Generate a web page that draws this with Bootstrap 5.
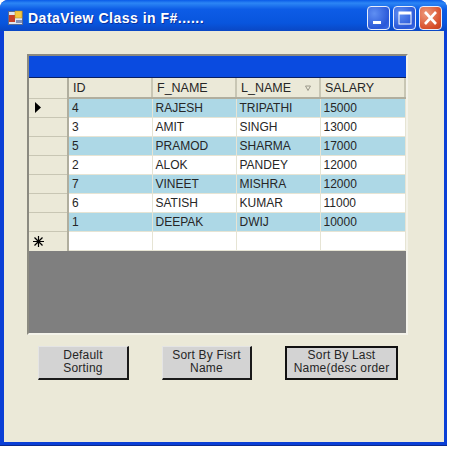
<!DOCTYPE html>
<html lang="en">
<head>
<meta charset="utf-8">
<title>DataView Class in F#</title>
<link href="https://cdn.jsdelivr.net/npm/bootstrap@5.3.0/dist/css/bootstrap.min.css" rel="stylesheet">
<style>
html,body{margin:0;background:#fff;height:449px;overflow:hidden}
body{font-family:"Liberation Sans",Arial,sans-serif;color:#111}
.xp-window{width:447px;height:446px;background:#0a3fd6;border-radius:8px 8px 0 0;border-bottom:1px solid #0c2a8c;overflow:hidden}
.xp-title{height:31px;padding:4px 5px 0 8px;background:linear-gradient(180deg,#0a5be8 0,#2c86f5 10%,#0d5ce6 30%,#0855dd 75%,#0a47c4 100%)}
.xp-heading{color:#fff;font:700 14px "Liberation Sans",sans-serif;letter-spacing:.5px;margin-left:4px;text-shadow:1px 1px 0 #0a2f9c}
.xp-ctl{width:23px;height:24px;border:1px solid #e8eefc;border-radius:4px;margin-left:3px;padding:0;display:flex;align-items:center;justify-content:center}
.xp-blue{background:radial-gradient(circle at 30% 30%,#5f8ff2,#2a58d8 70%,#3c6ee8)}
.xp-red{background:radial-gradient(circle at 30% 30%,#ee9a7c,#d8502c 70%,#c03c1c)}
.xp-client{height:411px;margin:0 3px 0 4px;background:#ebe9d8;padding:23px 36px 0 23px}
.dg-outer{width:381px;height:281px;background:#7f7f7f;border:2px solid;border-color:#8b8a80 #f4f3ea #f4f3ea #8b8a80}
.dg-caption{height:22px;background:#0a4be0;border-bottom:1px solid #0a1f60}
.dg-table.table{width:376px;table-layout:fixed;margin:0;border-collapse:collapse;--bs-table-bg:transparent;font-size:12px}
.dg-table.table>*>*>*{padding:0 0 0 3px;height:19px;line-height:18px;border:0;border-right:1px solid #e6e4d4;border-bottom:1px solid #e6e4d4;color:#262626;box-shadow:none;overflow:hidden;vertical-align:middle}
.dg-table.table>thead>tr>th{font-weight:400;height:20px;background:#ebe9d8;border-right:2px solid #c8c6b4;border-bottom:2px solid #b0ae9e;padding-left:4px;font-size:12.5px}
.dg-table.table>tbody>.dg-blue>td{background:#add8e6}
.dg-table.table>tbody>.dg-white>td{background:#fff}
.dg-table.table>tbody>tr>td.dg-rowhead,.dg-table.table>thead>tr>th.dg-rowhead{background:#ebe9d8;border-right:2px solid #b0ae9e;border-bottom:1px solid #c8c6b4;padding:0 0 0 6px;line-height:0}
.dg-table.table>tbody>tr>td.dg-newrow{padding-left:4px;border-bottom-color:#ebe9d8}
.sort-wrap{display:flex;justify-content:space-between;align-items:center;padding-right:8px}
.btn-row{padding:11px 0 0 11px;width:381px}
.xp-btn{height:34px;padding:0 0 2px;border-style:solid;border-color:#e4e4e4 #1a1a1a #1a1a1a #e4e4e4;border-width:1px 2px 2px 1px;border-radius:0;background:#d3d3d3;color:#262626;font-size:12px;line-height:13px;letter-spacing:.2px}
.xp-btn-a{width:91px;margin-right:33px}
.xp-btn-b{width:90px;margin-right:33px}
.xp-btn-c{width:113px;border:2px solid #111}
</style>
</head>
<body>
<div class="xp-window">
  <div class="xp-title d-flex align-items-center">
    <svg width="16" height="16" viewBox="0 0 16 16"><rect x=".5" y="1.5" width="14" height="13" fill="#dfe6f0" stroke="#5a6a90"/><rect x="1" y="5" width="6" height="7" fill="#c8402a"/><rect x="7" y="1" width="7" height="7" fill="#f4c840" stroke="#b08a20" stroke-width=".5"/><rect x="8" y="10" width="6" height="3" fill="#7f8fb8"/></svg>
    <span class="xp-heading flex-grow-1">DataView Class in F#......</span>
    <div class="xp-ctl xp-blue"><svg width="21" height="22" viewBox="0 0 21 22"><rect x="5" y="14" width="8" height="3" fill="#fff"/></svg></div>
    <div class="xp-ctl xp-blue"><svg width="21" height="22" viewBox="0 0 21 22"><rect x="5" y="5" width="12" height="12" fill="none" stroke="#fff"/><rect x="5" y="5" width="12" height="2.5" fill="#fff"/></svg></div>
    <div class="xp-ctl xp-red"><svg width="21" height="22" viewBox="0 0 21 22"><path d="M5 5l11 12M16 5L5 17" stroke="#fff" stroke-width="2.6"/></svg></div>
  </div>
  <div class="xp-client">
    <div class="dg-outer">
      <div class="dg-caption"></div>
      <table class="table dg-table">
        <colgroup><col style="width:39px"><col style="width:84px"><col style="width:84px"><col style="width:84px"><col style="width:85px"></colgroup>
        <thead><tr><th class="dg-rowhead"></th><th>ID</th><th>F_NAME</th><th><div class="sort-wrap"><span>L_NAME</span><svg width="6" height="6" viewBox="0 0 6 6"><path d="M.5 1h5L3 5.5z" fill="none" stroke="#9a988a"/></svg></div></th><th>SALARY</th></tr></thead>
        <tbody>
          <tr class="dg-blue"><td class="dg-rowhead"><svg width="6" height="11" viewBox="0 0 6 11"><path d="M0 0l6 5.5L0 11z" fill="#000"/></svg></td><td>4</td><td>RAJESH</td><td>TRIPATHI</td><td>15000</td></tr>
          <tr class="dg-white"><td class="dg-rowhead"></td><td>3</td><td>AMIT</td><td>SINGH</td><td>13000</td></tr>
          <tr class="dg-blue"><td class="dg-rowhead"></td><td>5</td><td>PRAMOD</td><td>SHARMA</td><td>17000</td></tr>
          <tr class="dg-white"><td class="dg-rowhead"></td><td>2</td><td>ALOK</td><td>PANDEY</td><td>12000</td></tr>
          <tr class="dg-blue"><td class="dg-rowhead"></td><td>7</td><td>VINEET</td><td>MISHRA</td><td>12000</td></tr>
          <tr class="dg-white"><td class="dg-rowhead"></td><td>6</td><td>SATISH</td><td>KUMAR</td><td>11000</td></tr>
          <tr class="dg-blue"><td class="dg-rowhead"></td><td>1</td><td>DEEPAK</td><td>DWIJ</td><td>10000</td></tr>
          <tr class="dg-white"><td class="dg-rowhead dg-newrow"><svg width="11" height="11" viewBox="0 0 11 11"><path d="M5.5 0v11M0 5.5h11M1.5 1.5l8 8M9.5 1.5l-8 8" stroke="#000" stroke-width="1.2"/></svg></td><td></td><td></td><td></td><td></td></tr>
        </tbody>
      </table>
    </div>
    <div class="btn-row d-flex">
      <button type="button" class="btn xp-btn xp-btn-a">Default<br>Sorting</button>
      <button type="button" class="btn xp-btn xp-btn-b">Sort By Fisrt<br>Name</button>
      <button type="button" class="btn xp-btn xp-btn-c">Sort By Last<br>Name(desc order</button>
    </div>
  </div>
</div>
</body>
</html>
